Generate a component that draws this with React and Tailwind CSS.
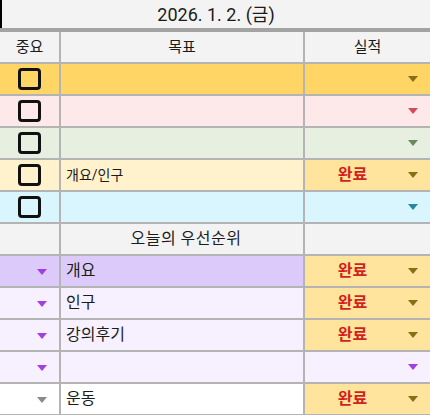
import React from "react";

const FONT = { fontFamily: 'Roboto, "Noto Sans CJK KR", "Noto Sans", sans-serif' };

const Arrow = ({ color }) => (
  <svg width="10" height="6" viewBox="0 0 10 6" className="shrink-0">
    <polygon points="0,0 10,0 5,6" fill={color} />
  </svg>
);

const Checkbox = () => (
  <div className="w-[23px] h-[22px] rounded-[4px] border-[3px] border-[#111]" />
);

const Done = ({ arrow = "#857018", text = "완료", bg = "bg-[#fee49c]" }) => (
  <div className={`flex items-center h-full ${bg}`}>
    <div className="flex-1 text-center text-[16px] font-bold text-[#d41f1a]">{text}</div>
    <div className="w-[30px] flex justify-center pr-[4px]">
      <Arrow color={arrow} />
    </div>
  </div>
);

const goals = [
  { bg: "bg-[#ffd666]", text: "", arrow: "#857018", done: false },
  { bg: "bg-[#fde9e9]", text: "", arrow: "#d24d5a", done: false },
  { bg: "bg-[#e6efe0]", text: "", arrow: "#6a8a5b", done: false },
  { bg: "bg-[#fff2cc]", text: "개요/인구", arrow: "#857018", done: true },
  { bg: "bg-[#d9f6fe]", text: "", arrow: "#23899b", done: false },
];

const priorities = [
  { bg: "bg-[#dccbfa]", text: "개요", arrow: "#a23fe0", done: true },
  { bg: "bg-[#f6f0ff]", text: "인구", arrow: "#a23fe0", done: true },
  { bg: "bg-[#f6f0ff]", text: "강의후기", arrow: "#a23fe0", done: true },
  { bg: "bg-[#f6f0ff]", text: "", arrow: "#a23fe0", done: false },
  { bg: "bg-white", text: "운동", arrow: "#8a8a8a", done: true },
];

export default function App() {
  return (
    <div className="w-[430px] h-[415px] overflow-hidden bg-white text-[#1b1b1b]" style={FONT}>
      <div className="h-[28px] bg-[#f3f3f3] border-l-2 border-black flex items-center justify-center text-[18px]">
        2026. 1. 2. (금)
      </div>
      <div className="h-[4px] bg-[#a3a3a3]" />
      <div className="grid grid-cols-[59px_242px_125px] auto-rows-[30px] gap-[2px] bg-[#b4b4b4] pb-[2px]">
        <div className="bg-[#f3f3f3] flex items-center justify-center text-[15px]">중요</div>
        <div className="bg-[#f3f3f3] flex items-center justify-center text-[15px]">목표</div>
        <div className="bg-[#f3f3f3] flex items-center justify-center text-[15px]">실적</div>

        {goals.map((g, i) => (
          <React.Fragment key={i}>
            <div className={`${g.bg} flex items-center justify-center`}>
              <Checkbox />
            </div>
            <div className={`${g.bg} flex items-center px-[5px] text-[14px]`}>{g.text}</div>
            {g.done ? (
              <Done arrow={g.arrow} />
            ) : (
              <Done arrow={g.arrow} text="" bg={g.bg} />
            )}
          </React.Fragment>
        ))}

        <div className="bg-[#f3f3f3]" />
        <div className="bg-[#f3f3f3] flex items-center justify-center pl-[8px] text-[16px] tracking-[0.5px]">오늘의 우선순위</div>
        <div className="bg-[#f3f3f3]" />

        {priorities.map((p, i) => (
          <React.Fragment key={i}>
            <div className={`${p.bg} flex items-center justify-end pr-[12px] pt-[2px]`}>
              <Arrow color={p.arrow} />
            </div>
            <div className={`${p.bg} flex items-center px-[5px] text-[16px]`}>{p.text}</div>
            {p.done ? <Done /> : <Done arrow={p.arrow} text="" bg={p.bg} />}
          </React.Fragment>
        ))}
      </div>
    </div>
  );
}
